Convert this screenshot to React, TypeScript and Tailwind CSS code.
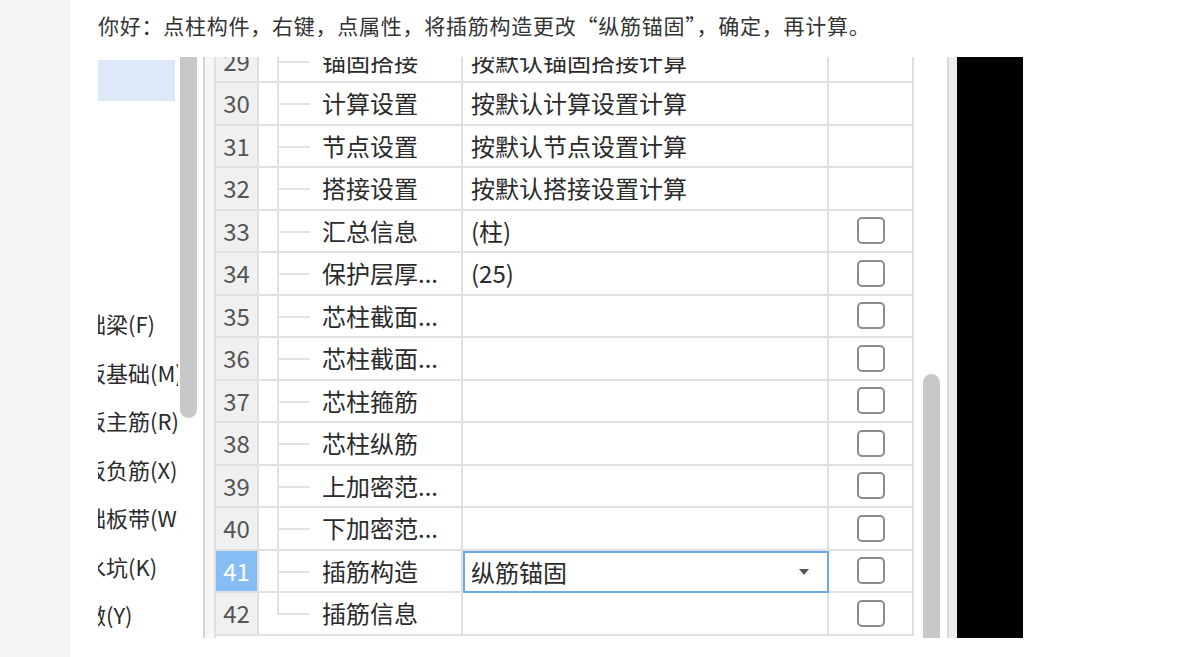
import React from 'react';

// 属性列表行数据（截图中可见部分）
const rows = [
  { no: 29, name: '锚固搭接', value: '按默认锚固搭接计算', check: false },
  { no: 30, name: '计算设置', value: '按默认计算设置计算', check: false },
  { no: 31, name: '节点设置', value: '按默认节点设置计算', check: false },
  { no: 32, name: '搭接设置', value: '按默认搭接设置计算', check: false },
  { no: 33, name: '汇总信息', value: '(柱)', check: true },
  { no: 34, name: '保护层厚...', value: '(25)', check: true },
  { no: 35, name: '芯柱截面...', value: '', check: true },
  { no: 36, name: '芯柱截面...', value: '', check: true },
  { no: 37, name: '芯柱箍筋', value: '', check: true },
  { no: 38, name: '芯柱纵筋', value: '', check: true },
  { no: 39, name: '上加密范...', value: '', check: true },
  { no: 40, name: '下加密范...', value: '', check: true },
  { no: 41, name: '插筋构造', value: '纵筋锚固', check: true },
  { no: 42, name: '插筋信息', value: '', check: true },
];

const navItems = ['础梁(F)', '板基础(M)', '板主筋(R)', '板负筋(X)', '础板带(W)', '水坑(K)', '墩(Y)'];

const font = { fontFamily: '"Noto Sans CJK SC", "Noto Sans", sans-serif' };

export default function App() {
  return (
    <div className="flex min-h-[657px] bg-white text-[#333]" style={font}>
      {/* 左侧灰条 */}
      <div className="w-[70px] shrink-0 bg-[#f3f4f5]" />

      <div className="pl-[28px] pt-[10px]">
        <p className="text-[21px] leading-[30px] tracking-[0.75px] text-[#333] whitespace-nowrap">
          你好：点柱构件，右键，点属性，将插筋构造更改“纵筋锚固”，确定，再计算。
        </p>

        {/* 截图区域 */}
        <div className="mt-[17px] flex h-[581px] w-[925px] overflow-hidden bg-white">
          {/* 左侧构件树 */}
          <div className="w-[80px] shrink-0 overflow-hidden">
            <div className="mt-[3px] h-[41px] w-[77px] bg-[#dde8f8]" />
            <div className="mt-[198px] flex flex-col">
              {navItems.map((t) => (
                <div key={t} className="flex h-[48.5px] items-center whitespace-nowrap">
                  <span className="ml-[-14px] text-[22px] leading-none text-[#2b2b2b]">{t}</span>
                </div>
              ))}
            </div>
          </div>
          <div className="w-[2px] shrink-0" />

          {/* 左侧滚动条 */}
          <div className="w-[17px] shrink-0">
            <div className="h-[361px] rounded-b-full bg-[#c8c8c8]" />
          </div>
          <div className="w-[6px] shrink-0" />
          <div className="w-[11px] shrink-0 border-l-2 border-[#d2d2d2] bg-[#f6f6f6]" />

          {/* 属性表 */}
          <div className="w-[700px] shrink-0 overflow-hidden border-l-2 border-[#e0e0e0]">
            <div className="mt-[-16.5px]">
              {rows.map((r, i) => {
                const active = r.no === 41;
                const last = i === rows.length - 1;
                return (
                  <div key={r.no} className="grid h-[42.5px] grid-cols-[43px_204px_366px_85px]">
                    <div
                      className={`flex items-center justify-center border-b-2 border-r-2 border-[#e0e0e0] text-[24px] ${
                        active ? 'bg-[#86bdf5] text-white' : 'bg-[#f0f0f0] text-[#555]'
                      }`}
                    >
                      {r.no}
                    </div>
                    <div className="relative flex items-center border-b-2 border-r-2 border-[#e0e0e0] pl-[63px] text-[24px] whitespace-nowrap text-[#2b2b2b]">
                      <span className={`absolute left-[18px] top-0 w-[2px] bg-[#e2e2e2] ${last ? 'h-1/2' : 'h-[calc(100%+2px)]'}`} />
                      <span className="absolute left-[18px] top-1/2 h-[2px] w-[33px] bg-[#e2e2e2]" />
                      {r.name}
                    </div>
                    {active ? (
                      <div className="flex items-center justify-between border-2 border-[#6ea9ec] pl-[6px] pr-[18px] text-[24px] text-[#2b2b2b]">
                        <span>{r.value}</span>
                        <svg width="10" height="6" viewBox="0 0 10 6">
                          <path d="M0 0 L10 0 L5 6 Z" fill="#555" />
                        </svg>
                      </div>
                    ) : (
                      <div className="flex items-center border-b-2 border-r-2 border-[#e0e0e0] pl-[8px] text-[24px] whitespace-nowrap text-[#2b2b2b]">
                        {r.value}
                      </div>
                    )}
                    <div className="flex items-center justify-center border-b-2 border-r-2 border-[#e0e0e0]">
                      {r.check && (
                        <div className="h-[27px] w-[28px] rounded-[5px] border-2 border-[#8c8c8c] bg-white" />
                      )}
                    </div>
                  </div>
                );
              })}
            </div>
          </div>

          {/* 右侧滚动条 */}
          <div className="flex w-[33px] shrink-0 flex-col pl-[9px] pt-[317px]">
            <div className="w-[17px] flex-1 rounded-t-full bg-[#c8c8c8]" />
          </div>
          <div className="w-[10px] shrink-0 border-l-2 border-[#d8d8d8] bg-[#ececec]" />
          <div className="flex-1 bg-black" />
        </div>
      </div>
    </div>
  );
}
